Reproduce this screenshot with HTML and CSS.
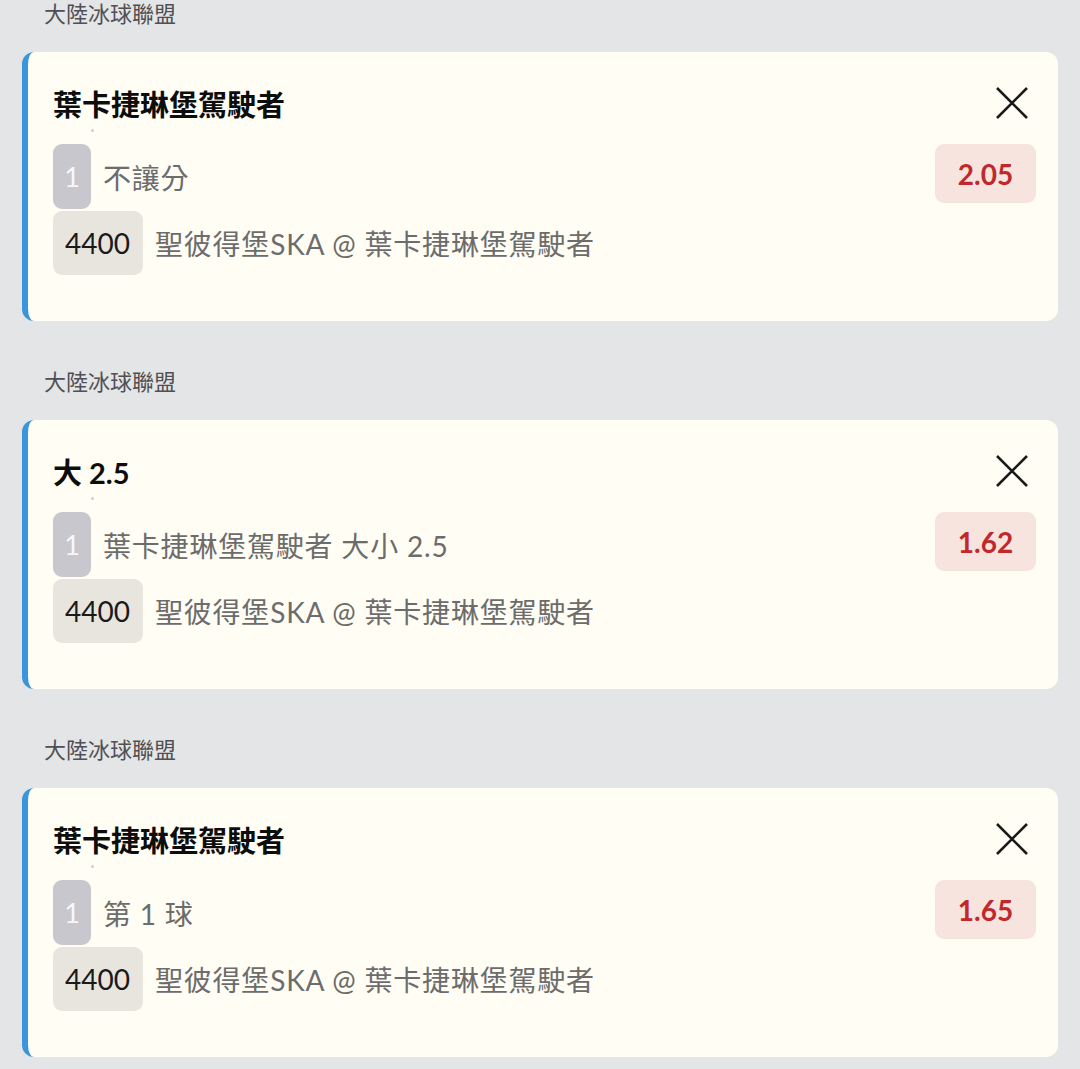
FILE: index.html
```html
<!DOCTYPE html>
<html lang="zh-Hant">

<head>
    <meta charset="UTF-8">
    <meta name="viewport" content="width=device-width, initial-scale=1.0">
    <title>投注單</title>
    <link rel="stylesheet" href="styles.css">
</head>

<body>
    <div class="slip">

        <div class="group">
            <div class="league">大陸冰球聯盟</div>
            <div class="card">
                <div class="card-head">
                    <span class="pick">葉卡捷琳堡駕駛者</span>
                    <button class="close" aria-label="移除">
                        <svg viewBox="0 0 32 32" width="32" height="32"><path d="M1 1 L31 31 M31 1 L1 31" /></svg>
                    </button>
                </div>
                <span class="dot"></span>
                <div class="card-body">
                    <div class="lines">
                        <div class="line">
                            <span class="num">1</span>
                            <span class="market">不讓分</span>
                        </div>
                        <div class="line">
                            <span class="code">4400</span>
                            <span class="market">聖彼得堡SKA @ 葉卡捷琳堡駕駛者</span>
                        </div>
                    </div>
                    <div class="odds">2.05</div>
                </div>
            </div>
        </div>

        <div class="group">
            <div class="league">大陸冰球聯盟</div>
            <div class="card">
                <div class="card-head">
                    <span class="pick">大 2.5</span>
                    <button class="close" aria-label="移除">
                        <svg viewBox="0 0 32 32" width="32" height="32"><path d="M1 1 L31 31 M31 1 L1 31" /></svg>
                    </button>
                </div>
                <span class="dot"></span>
                <div class="card-body">
                    <div class="lines">
                        <div class="line">
                            <span class="num">1</span>
                            <span class="market">葉卡捷琳堡駕駛者 大小 2.5</span>
                        </div>
                        <div class="line">
                            <span class="code">4400</span>
                            <span class="market">聖彼得堡SKA @ 葉卡捷琳堡駕駛者</span>
                        </div>
                    </div>
                    <div class="odds">1.62</div>
                </div>
            </div>
        </div>

        <div class="group">
            <div class="league">大陸冰球聯盟</div>
            <div class="card">
                <div class="card-head">
                    <span class="pick">葉卡捷琳堡駕駛者</span>
                    <button class="close" aria-label="移除">
                        <svg viewBox="0 0 32 32" width="32" height="32"><path d="M1 1 L31 31 M31 1 L1 31" /></svg>
                    </button>
                </div>
                <span class="dot"></span>
                <div class="card-body">
                    <div class="lines">
                        <div class="line">
                            <span class="num">1</span>
                            <span class="market">第 1 球</span>
                        </div>
                        <div class="line">
                            <span class="code">4400</span>
                            <span class="market">聖彼得堡SKA @ 葉卡捷琳堡駕駛者</span>
                        </div>
                    </div>
                    <div class="odds">1.65</div>
                </div>
            </div>
        </div>

    </div>
</body>

</html>
```

FILE: styles.css
```css
body {
    margin: 0;
    background-color: #e4e5e7;
    font-family: Lato, "Noto Sans CJK TC", sans-serif;
}

.slip {
    padding: 0 22px;
}

.group + .group {
    margin-top: 47px;
}

.league {
    padding-left: 22px;
    font-size: 22px;
    line-height: 28px;
    color: #505054;
    margin-bottom: 24px;
}

.card {
    background-color: #fffdf4;
    border-left: 6px solid #3a96da;
    border-radius: 12px;
    padding: 30px 22px 46px 25px;
    position: relative;
}

.card-head {
    display: flex;
    justify-content: space-between;
    align-items: center;
    height: 42px;
    margin-bottom: 20px;
}

.pick {
    font-size: 29px;
    font-weight: bold;
    color: #0d0d0d;
}

.close {
    border: none;
    background: none;
    padding: 0;
    margin-right: 8px;
    width: 32px;
    height: 32px;
}

.close svg {
    display: block;
    stroke: #1a1a1a;
    stroke-width: 2.6;
    fill: none;
}

/* tiny marker under the pick name */
.dot {
    position: absolute;
    left: 63px;
    top: 77px;
    width: 3px;
    height: 3px;
    border-radius: 50%;
    background-color: #b9d6ea;
}

.card-body {
    display: flex;
    justify-content: space-between;
    align-items: flex-start;
}

.lines {
    display: flex;
    flex-direction: column;
    gap: 2px;
}

.line {
    display: flex;
    align-items: center;
    gap: 12px;
}

.num {
    width: 38px;
    height: 65px;
    border-radius: 9px;
    background-color: #c7c7cd;
    color: #f8f8fa;
    font-size: 27px;
    display: flex;
    justify-content: center;
    align-items: center;
}

.code {
    height: 64px;
    padding: 0 13px 0 12px;
    border-radius: 9px;
    background-color: #e7e5de;
    color: #1a1a1a;
    font-size: 28px;
    display: flex;
    align-items: center;
}

.market {
    font-size: 28px;
    letter-spacing: 0.8px;
    color: #6c6c6c;
}

.odds {
    width: 101px;
    height: 59px;
    border-radius: 9px;
    background-color: #f7e4de;
    color: #c0282b;
    font-size: 28px;
    font-weight: bold;
    display: flex;
    justify-content: center;
    align-items: center;
}
```
